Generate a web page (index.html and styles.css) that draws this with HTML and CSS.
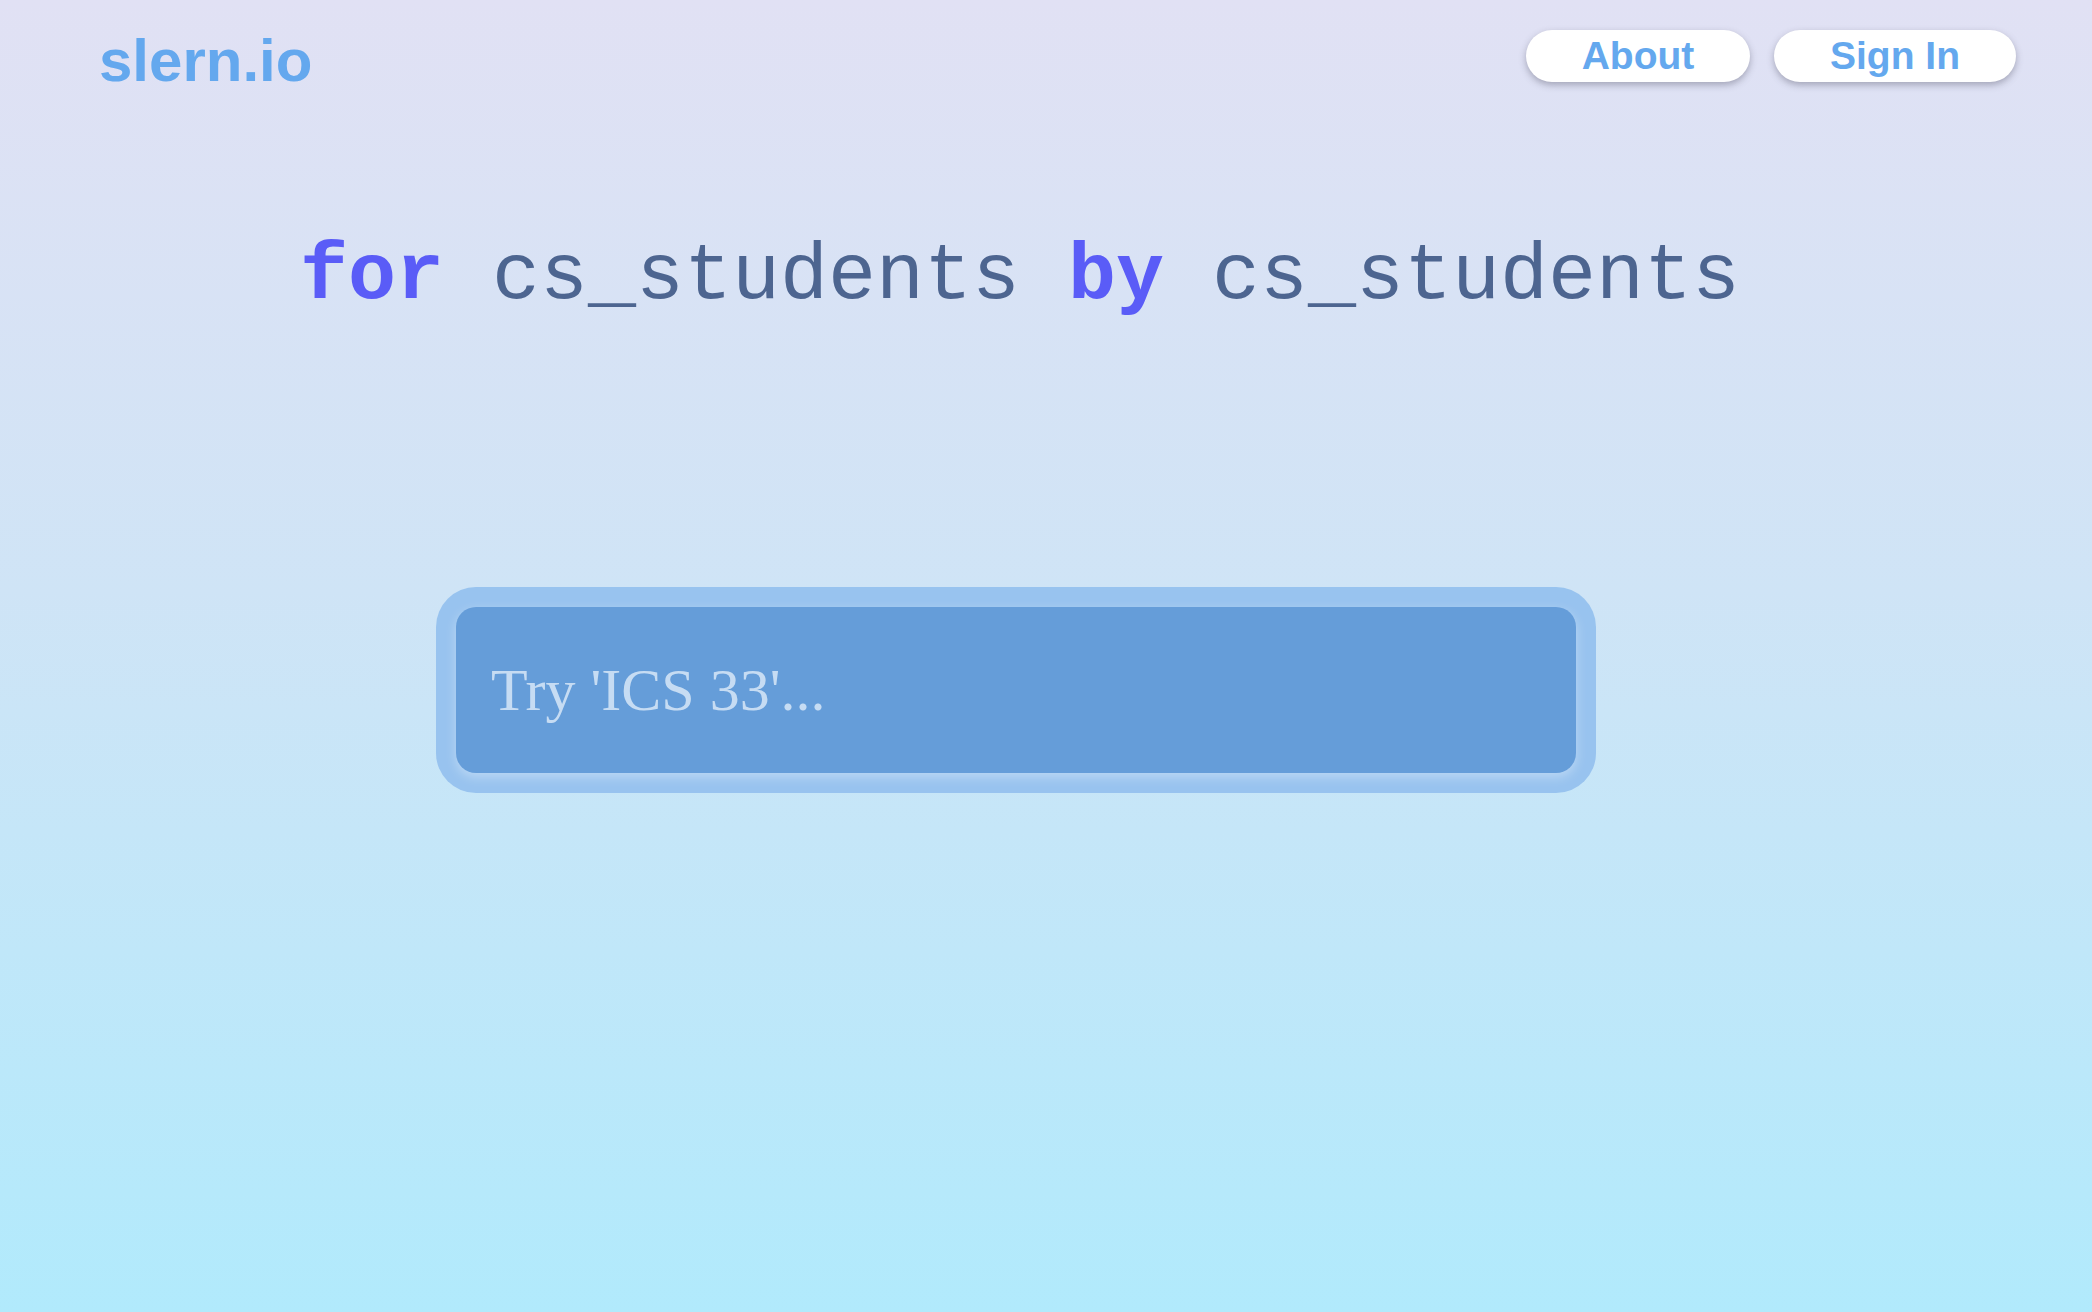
FILE: index.html
```html
<!DOCTYPE html>
<html lang="en">
<head>
<meta charset="utf-8">
<title>slern.io</title>
<link rel="stylesheet" href="styles.css">
</head>
<body>
<div class="page">
  <header class="topbar">
    <a class="logo" href="#">slern.io</a>
    <nav class="nav">
      <a class="pill" href="#">About</a>
      <a class="pill pill-wide" href="#">Sign In</a>
    </nav>
  </header>
  <main class="main">
    <h1 class="tagline"><span class="kw">for</span> cs_students <span class="kw">by</span> cs_students</h1>
    <div class="search-wrap">
      <input class="search" type="text" placeholder="Try 'ICS 33'...">
    </div>
  </main>
</div>
</body>
</html>
```

FILE: styles.css
```css
html, body {
  margin: 0;
  padding: 0;
  height: 100%;
}
body {
  background: linear-gradient(to bottom, #e1e1f4 0%, #cfe4f6 45%, #b1eafc 100%);
  font-family: "Liberation Sans", Arial, sans-serif;
}
.page {
  min-height: 100vh;
  display: flex;
  flex-direction: column;
}
.topbar {
  display: flex;
  justify-content: space-between;
  align-items: flex-start;
  padding: 30px 76px 0 99px;
}
.logo {
  font-family: "Liberation Sans", Arial, sans-serif;
  font-weight: bold;
  font-size: 60px;
  line-height: 1;
  color: #64a8ee;
  text-decoration: none;
  margin-top: 1px;
}
.nav {
  display: flex;
  gap: 24px;
}
.pill {
  display: block;
  width: 224px;
  height: 52px;
  line-height: 52px;
  text-align: center;
  background: #ffffff;
  border-radius: 26px;
  color: #64a8ee;
  font-weight: bold;
  font-size: 39px;
  text-decoration: none;
  box-shadow: 0 3px 7px rgba(90, 90, 110, 0.45);
}
.pill-wide {
  width: 242px;
}
.main {
  display: flex;
  flex-direction: column;
  align-items: center;
  padding-right: 60px;
}
.tagline {
  margin: 146px 0 0 8px;
  font-family: "Liberation Mono", "Courier New", monospace;
  font-weight: normal;
  font-size: 80px;
  line-height: 1;
  color: #4d6590;
  white-space: pre;
}
.kw {
  font-weight: bold;
  color: #5a5cf7;
}
.search-wrap {
  margin-top: 270px;
  padding: 20px;
  background: #98c3ef;
  border-radius: 40px;
}
.search {
  display: block;
  box-sizing: border-box;
  width: 1120px;
  height: 166px;
  border: none;
  outline: none;
  border-radius: 20px;
  background: #659dd9;
  padding: 0 35px;
  font-family: "Liberation Serif", "Times New Roman", serif;
  font-size: 60px;
  color: #ffffff;
  box-shadow: 0 4px 12px rgba(255, 255, 255, 0.35);
}
.search::placeholder {
  color: #c6dcf3;
  opacity: 1;
}
```
